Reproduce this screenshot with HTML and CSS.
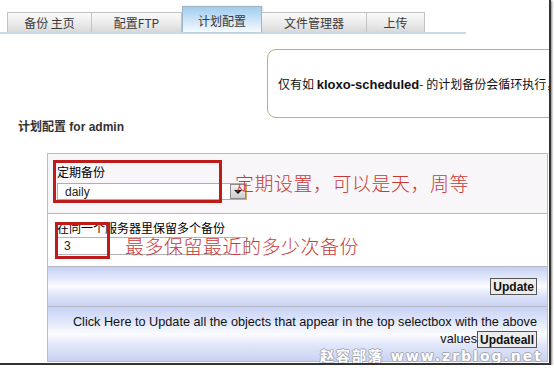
FILE: index.html
```html
<!DOCTYPE html>
<html lang="zh-CN">
<head>
  <meta charset="UTF-8" />
  <title>计划配置</title>
  <link rel="stylesheet" href="styles.css">
</head>
<body>

<div class="shot">
  <div class="tabs">
    <div class="tab tab-home">备份 主页</div>
    <div class="tab tab-ftp">配置FTP</div>
    <div class="tab tab-plan active">计划配置</div>
    <div class="tab tab-files">文件管理器</div>
    <div class="tab tab-upload">上传</div>
  </div>

  <div class="notice">
    <p>仅有如 <b>kloxo-scheduled</b>- 的计划备份会循环执行，</p>
  </div>

  <h2 class="title">计划配置 for admin</h2>

  <div class="form-table">
    <div class="row row-period">
      <label>定期备份</label>
      <div class="select">
        <span class="select-value">daily</span>
        <span class="select-btn">
          <svg width="8" height="6" viewBox="0 0 8 6"><path d="M0 1h8L4 5z" fill="#111"/></svg>
        </span>
      </div>
      <!-- annotation -->
      <div class="mark mark-period"></div>
      <div class="note note-period">定期设置，可以是天，周等</div>
    </div>

    <div class="row row-keep">
      <label>在同一个服务器里保留多个备份</label>
      <div class="input">3</div>
      <div class="mark mark-keep"></div>
      <div class="note note-keep">最多保留最近的多少次备份</div>
    </div>

    <div class="row row-update">
      <button class="btn">Update</button>
    </div>

    <div class="row row-all">
      <p>Click Here to Update all the objects that appear in the top selectbox with the above<br>values<button class="btn">Updateall</button></p>
    </div>
  </div>

  <div class="watermark">赵容部落 www.zrblog.net</div>
</div>

</body>
</html>
```

FILE: styles.css
```css
* { box-sizing: border-box; }

body {
  margin: 0;
  background: #fff;
  font-family: 'Liberation Sans', 'Noto Sans CJK SC', sans-serif;
  font-size: 12px;
  color: #222;
}

.shot {
  position: relative;
  width: 551px;
  height: 365px;
  overflow: hidden;
  background: #fff;
  border-right: 2px solid #333;
  border-bottom: 2px solid #333;
  box-shadow: 1px 1px 2px rgba(0,0,0,0.5);
}

/* tabs */
.tabs {
  display: flex;
  align-items: flex-end;
  width: 466px;
  height: 34px;
  padding-left: 7px;
  border-bottom: 2px solid #cadbe7;
}

.tab {
  height: 20px;
  display: flex;
  align-items: center;
  justify-content: center;
  font-family: 'Noto Sans CJK SC', sans-serif;
  font-size: 12px;
  color: #3a3a3a;
  background: linear-gradient(#fbfbfb, #e6e6e6 70%, #d8d8d8);
  border: 1px solid #c4c4c4;
  border-bottom: none;
}

.tab + .tab { border-left: none; }

.tab-home { width: 85px; }
.tab-ftp { width: 90px; }
.tab-plan { width: 80px; }
.tab-files { width: 105px; }
.tab-upload { width: 58px; }

.tab.active {
  height: 26px;
  padding-top: 2px;
  background: linear-gradient(#9fcdee, #cfe6f7 55%, #f6fbff);
  border: 1px solid #9fb7c8;
  border-bottom: none;
  box-shadow: 1px 0 2px rgba(0,0,0,0.15);
}

/* notice box */
.notice {
  display: flex;
  align-items: center;
  width: 320px;
  height: 69px;
  margin: 15px 0 0 267px;
  padding-left: 10px;
  border: 1px solid #c9a877;
  border-radius: 9px;
}

.notice p {
  margin: 0;
  white-space: nowrap;
  font-family: 'Noto Sans CJK SC', sans-serif;
  font-size: 12px;
  color: #111;
}

.notice b {
  font-family: 'Liberation Sans', sans-serif;
  font-size: 13px;
}

.title {
  margin: 1px 0 0 18px;
  height: 16px;
  line-height: 16px;
  font-size: 12px;
  font-weight: bold;
  color: #333;
}

/* form table */
.form-table {
  width: 501px;
  margin: 18px 0 0 47px;
  border: 1px solid #b5bdcc;
}

.row {
  position: relative;
  border-top: 1px solid #b8b8c2;
}

.row:first-child { border-top: none; }

.row label {
  display: block;
  height: 14px;
  line-height: 14px;
  font-family: 'Noto Sans CJK SC', sans-serif;
  font-size: 12px;
  color: #000;
}

.row-period {
  height: 59px;
  padding: 11px 0 0 9px;
  background: #f8f6f8;
}

.row-period label { margin-bottom: 4px; }

.select {
  display: flex;
  align-items: center;
  width: 190px;
  height: 17px;
  border: 1px solid #d6a863;
  background: #fff;
}

.select-value {
  flex: 1;
  padding-left: 7px;
  font-size: 12px;
  color: #222;
}

.select-btn {
  display: flex;
  align-items: center;
  justify-content: center;
  width: 16px;
  height: 15px;
  background: linear-gradient(#f2f2f2, #cdcdcd);
  border: 1px solid #8c8c8c;
}

.row-keep {
  height: 53px;
  padding: 7px 0 0 9px;
  background: #fff;
}

.input {
  width: 190px;
  height: 18px;
  margin-top: 2px;
  padding-left: 6px;
  line-height: 16px;
  border: 1px solid #b4b4b4;
  font-size: 12px;
  color: #222;
}

.row-update,
.row-all {
  background: linear-gradient(#c6d1f4, #e4eafb 30%, #fbfcff 50%, #e1e7fa 70%, #c8d2f3);
}

.row-update {
  display: flex;
  align-items: center;
  justify-content: flex-end;
  height: 40px;
  padding-right: 10px;
}

.row-all {
  height: 55px;
  padding: 7px 10px 0 0;
}

.row-all p {
  margin: 0;
  text-align: right;
  line-height: 17px;
  font-size: 12.7px;
  color: #111;
}

.btn {
  height: 17px;
  padding: 0 2px;
  font-family: 'Liberation Sans', sans-serif;
  font-size: 12px;
  font-weight: bold;
  color: #111;
  background: #ececec;
  border: 1px solid #555;
  border-radius: 0;
  vertical-align: middle;
}

/* red annotations drawn over the form */
.mark {
  position: absolute;
  border: 3px solid #bf1b1b;
}

.mark-period { left: 5px; top: 6px; width: 169px; height: 43px; }
.mark-keep { left: 7px; top: 8px; width: 55px; height: 37px; }

.note {
  position: absolute;
  font-family: 'Noto Sans CJK SC', sans-serif;
  font-size: 19px;
  font-weight: 300;
  line-height: 24px;
  color: #c83a3a;
  white-space: nowrap;
  letter-spacing: 0.5px;
}

.note-period { left: 187px; top: 17px; }
.note-keep { left: 77px; top: 20px; }

.watermark {
  position: absolute;
  right: 6px;
  bottom: 1px;
  line-height: 12px;
  font-family: 'DejaVu Sans', 'Noto Sans CJK SC', sans-serif;
  font-size: 14px;
  font-weight: bold;
  letter-spacing: 2px;
  color: #fff;
  text-shadow: 1px 0 0 #a4a8b4, -1px 0 0 #a4a8b4, 0 1px 0 #a4a8b4, 0 -1px 0 #a4a8b4;
}
```
